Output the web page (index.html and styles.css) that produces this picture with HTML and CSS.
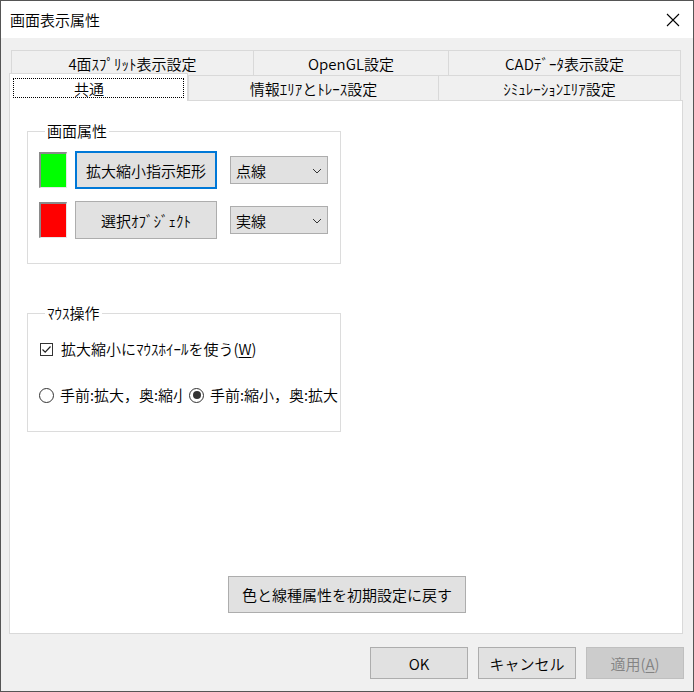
FILE: index.html
```html
<!DOCTYPE html>
<html lang="ja">
<head>
<meta charset="utf-8">
<title>画面表示属性</title>
<link rel="stylesheet" href="styles.css">
</head>
<body>
<div class="window">
  <div class="titlebar">
    <span class="title">画面表示属性</span>
    <svg class="close" width="14" height="14" viewBox="0 0 14 14"><path d="M1 1 L13 13 M13 1 L1 13" stroke="#000" stroke-width="1.1" fill="none"/></svg>
  </div>
  <div class="body">
    <div class="tabs">
      <div class="tabrow">
        <div class="tab t1">4面ｽﾌﾟﾘｯﾄ表示設定</div>
        <div class="tab t2">OpenGL設定</div>
        <div class="tab last">CADﾃﾞｰﾀ表示設定</div>
      </div>
      <div class="tabrow">
        <div class="tab selected"><span class="focus">共通</span></div>
        <div class="tab t5">情報ｴﾘｱとﾄﾚｰｽ設定</div>
        <div class="tab last">ｼﾐｭﾚｰｼｮﾝｴﾘｱ設定</div>
      </div>
    </div>
    <div class="panel">
      <fieldset class="group g1">
        <legend>画面属性</legend>
        <div class="row">
          <span class="swatch green"></span>
          <button class="btn wide focused">拡大縮小指示矩形</button>
          <div class="combo"><span>点線</span><svg width="10" height="6" viewBox="0 0 10 6"><path d="M1 1 L5 5 L9 1" stroke="#333" stroke-width="1" fill="none"/></svg></div>
        </div>
        <div class="row">
          <span class="swatch red"></span>
          <button class="btn wide">選択ｵﾌﾞｼﾞｪｸﾄ</button>
          <div class="combo"><span>実線</span><svg width="10" height="6" viewBox="0 0 10 6"><path d="M1 1 L5 5 L9 1" stroke="#333" stroke-width="1" fill="none"/></svg></div>
        </div>
      </fieldset>
      <fieldset class="group g2">
        <legend>ﾏｳｽ操作</legend>
        <div class="check-row">
          <span class="checkbox"><svg width="11" height="11" viewBox="0 0 11 11"><path d="M1.5 5.5 L4.2 8.2 L9.5 2.5" stroke="#222" stroke-width="1.2" fill="none"/></svg></span>
          <span class="label">拡大縮小にﾏｳｽﾎｲｰﾙを使う(<u>W</u>)</span>
        </div>
        <div class="radio-row">
          <div class="radio-item clip"><span class="radio"></span><span class="label">手前:拡大，奥:縮小</span></div>
          <div class="radio-item second"><span class="radio on"></span><span class="label">手前:縮小，奥:拡大</span></div>
        </div>
      </fieldset>
      <button class="btn reset">色と線種属性を初期設定に戻す</button>
    </div>
    <div class="footer">
      <button class="btn dlg">OK</button>
      <button class="btn dlg">キャンセル</button>
      <button class="btn dlg disabled">適用(<u>A</u>)</button>
    </div>
  </div>
</div>
</body>
</html>
```

FILE: styles.css
```css
* { box-sizing: border-box; }
html, body { margin: 0; padding: 0; }
body {
  font-family: "Noto Sans CJK JP", "Noto Sans", sans-serif;
  font-size: 15px;
  font-weight: 350;
  color: #000;
  background: #fff;
}
.window {
  width: 694px;
  height: 692px;
  border: 1px solid #555;
  display: flex;
  flex-direction: column;
  background: #f0f0f0;
}
.titlebar {
  height: 37px;
  background: #fff;
  display: flex;
  align-items: center;
  justify-content: space-between;
  padding: 0 13px 0 9px;
}
.title { font-size: 15px; line-height: 20px; margin-top: 1px; }
.close { display: block; margin-top: 1px; }
.body {
  flex: 1;
  display: flex;
  flex-direction: column;
  padding: 12px 9px 12px 8px;
}
.tabs { width: 670px; margin-left: 2px; }
.tabrow { display: flex; align-items: flex-start; height: 25px; }
.tab {
  height: 25px;
  border-top: 1px solid #d9d9d9;
  border-left: 1px solid #d9d9d9;
  background: #f0f0f0;
  text-align: center;
  line-height: 25px;
  font-size: 15px;
  white-space: nowrap;
}
.tab.last { flex: 1; border-right: 1px solid #d9d9d9; }
.t1 { width: 242px; }
.t2 { width: 195px; }
.t5 { width: 250px; }
.tab.selected {
  width: 179px;
  height: 28px;
  margin: -2px 0 -1px -2px;
  background: #fff;
  border: 1px solid #d9d9d9;
  border-bottom: none;
  position: relative;
  z-index: 2;
  padding: 4px 3px 0 3px;
}
.focus {
  display: block;
  height: 20px;
  line-height: 19px;
  border: 1px dotted #000;
  padding-right: 19px;
}
.panel {
  width: 674px;
  height: 534px;
  background: #fff;
  border: 1px solid #d9d9d9;
  display: flex;
  flex-direction: column;
  align-items: flex-start;
}
.group {
  margin: 0 0 0 17px;
  width: 314px;
  border: 1px solid #dcdcdc;
  min-width: 0;
}
.group legend {
  font-size: 15px;
  line-height: 18px;
  padding: 0 2px;
  margin-left: 6px;
}
.g1 { margin-top: 21px; padding: 11px 0 24px 11px; }
.g2 { margin-top: 40px; padding: 17px 0 26px 11px; }
.row { display: flex; align-items: center; height: 38px; }
.row + .row { margin-top: 12px; }
.swatch {
  width: 28px;
  height: 36px;
  border-top: 2px solid #8a8a8a;
  border-left: 2px solid #8a8a8a;
  border-right: 1px solid #e6e6e6;
  border-bottom: 1px solid #e6e6e6;
}
.green { background: #00ff00; }
.red { background: #ff0000; }
.btn {
  font-family: inherit;
  font-size: 15px;
  font-weight: 350;
  color: #000;
  background: #e1e1e1;
  border: 1px solid #adadad;
  padding: 0;
  margin: 0;
}
.btn.wide { width: 142px; height: 38px; margin-left: 8px; }
.btn.focused { border: 2px solid #0078d7; }
.combo {
  width: 98px;
  height: 28px;
  margin-left: 13px;
  background: #e1e1e1;
  border: 1px solid #adadad;
  display: flex;
  align-items: center;
  justify-content: space-between;
  padding: 0 5px 0 5px;
  font-size: 15px;
}
.combo svg { display: block; margin-top: 1px; }
.check-row { display: flex; align-items: center; height: 20px; }
.checkbox {
  width: 13px;
  height: 13px;
  border: 1px solid #333;
  margin: 0 8px 0 1px;
  display: flex;
  align-items: center;
  justify-content: center;
}
.checkbox svg { display: block; }
.label { font-size: 15px; line-height: 20px; white-space: nowrap; }
.radio-row { display: flex; align-items: center; height: 20px; margin-top: 26px; }
.radio-item { display: flex; align-items: center; white-space: nowrap; }
.radio-item.clip { width: 144px; overflow: hidden; }
.radio-item.second { margin-left: 6px; }
.radio {
  flex: none;
  width: 15px;
  height: 15px;
  border: 1px solid #333;
  border-radius: 50%;
  margin-right: 6px;
  display: flex;
  align-items: center;
  justify-content: center;
}
.radio.on::after {
  content: "";
  width: 8px;
  height: 8px;
  border-radius: 50%;
  background: #333;
}
.btn.reset {
  width: 238px;
  height: 37px;
  margin: auto 0 20px 0;
  align-self: center;
  position: relative;
  left: 1px;
}
.footer {
  margin-top: 13px;
  display: flex;
  justify-content: flex-end;
  gap: 10px;
}
.btn.dlg { width: 98px; height: 32px; }
.btn.disabled { background: #cccccc; border-color: #bfbfbf; color: #838383; }
u { text-underline-offset: 2px; }
```
